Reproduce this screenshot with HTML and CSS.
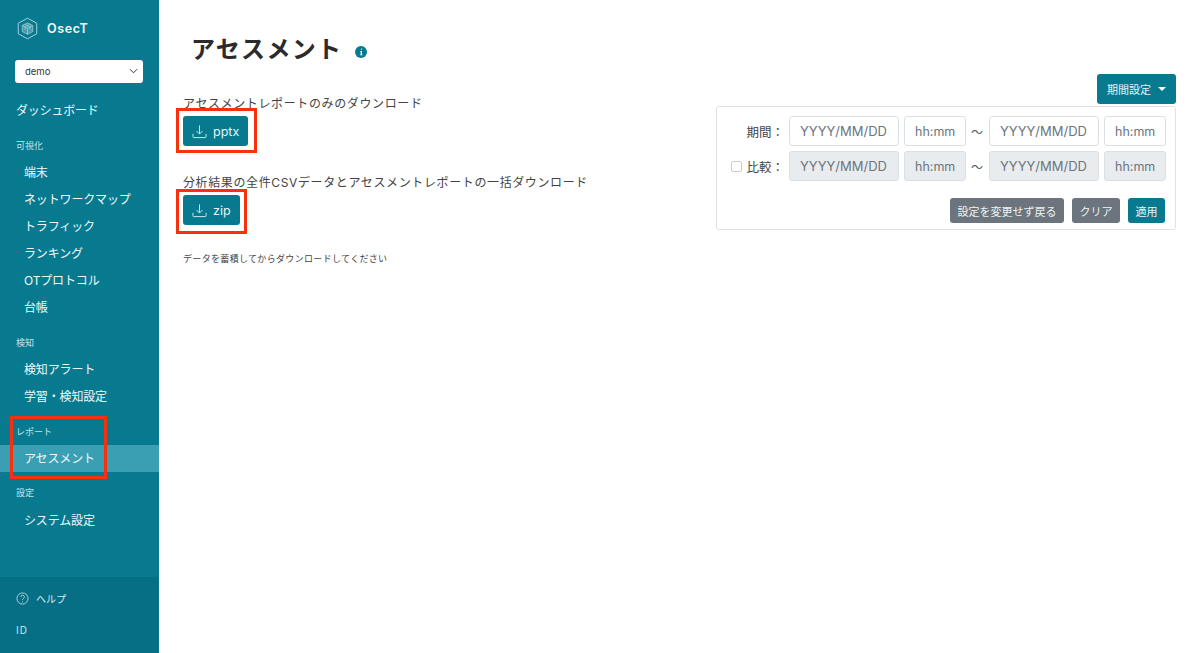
FILE: index.html
```html
<!DOCTYPE html>
<html lang="ja">
<head>
<meta charset="utf-8">
<title>アセスメント</title>
<link rel="stylesheet" href="styles.css">
</head>
<body>
<div class="app">
  <aside class="sidebar">
    <div class="side-top">
      <div class="brand">
        <svg class="logo" viewBox="0 0 24 26" width="21" height="23" fill="none" stroke="#a9d3dc">
          <path d="M12 1.200 22.600 7v12L12 24.800 1.400 19V7Z" stroke-width="1.100"/>
          <path d="M12 6.500 18 9.500v7l-6 3.200-6-3.200v-7Z" fill="#8fc6d0" fill-opacity=".45" stroke-width=".8"/>
          <path d="M6 9.500l6 3.200 6-3.200M12 12.700v7" stroke-width=".8"/>
          <path d="M9 8l6 3.200v3.600M15 8l-6 3.200v3.600" stroke-width=".6"/>
        </svg>
        <span class="brand-name">OsecT</span>
      </div>
      <div class="select">
        <span>demo</span>
        <svg viewBox="0 0 10 6" width="9" height="6" fill="none" stroke="#333" stroke-width="1.100"><path d="M1 1l4 4 4-4"/></svg>
      </div>
      <a class="nav-top">ダッシュボード</a>
      <div class="nav-label first">可視化</div>
      <a class="nav-item">端末</a>
      <a class="nav-item">ネットワークマップ</a>
      <a class="nav-item">トラフィック</a>
      <a class="nav-item">ランキング</a>
      <a class="nav-item">OTプロトコル</a>
      <a class="nav-item">台帳</a>
      <div class="nav-label">検知</div>
      <a class="nav-item">検知アラート</a>
      <a class="nav-item">学習・検知設定</a>
      <div class="nav-label">レポート</div>
      <a class="nav-item active">アセスメント</a>
      <div class="nav-label tight">設定</div>
      <a class="nav-item">システム設定</a>
    </div>
    <div class="side-bottom">
      <div class="help">
        <svg viewBox="0 0 14 14" width="13" height="13" fill="none" stroke="#b5d8df" stroke-width="1"><circle cx="7" cy="7" r="6"/><path d="M5.200 5.400a1.900 1.900 0 1 1 2.700 1.700c-.6.3-.9.7-.9 1.300"/><path d="M7 10v.9"/></svg>
        <span>ヘルプ</span>
      </div>
      <div class="id">ID</div>
    </div>
  </aside>
  <main class="main">
    <h1 class="title">アセスメント<svg class="info" viewBox="0 0 12 12" width="12" height="12"><circle cx="6" cy="6" r="6" fill="#087a90"/><path d="M6 2.600h.9v1.100H6zM5.200 5h1.700v3.500h.7v.8H4.900v-.8h.8V5.800h-.5z" fill="#fff"/></svg></h1>
    <div class="columns">
      <section class="downloads">
        <p class="dl-label">アセスメントレポートのみのダウンロード</p>
        <div class="dl-wrap">
          <button class="btn-dl">
            <svg viewBox="0 0 16 16" width="15" height="15" fill="none" stroke="#d5ebef" stroke-width="1"><path d="M8 1.500v9M4.800 7.500 8 10.700l3.200-3.200M1 10.500v3a1 1 0 0 0 1 1h12a1 1 0 0 0 1-1v-3"/></svg>
            <span>pptx</span>
          </button>
          <span class="mark mark-a"></span>
        </div>
        <p class="dl-label second">分析結果の全件CSVデータとアセスメントレポートの一括ダウンロード</p>
        <div class="dl-wrap">
          <button class="btn-dl">
            <svg viewBox="0 0 16 16" width="15" height="15" fill="none" stroke="#d5ebef" stroke-width="1"><path d="M8 1.500v9M4.800 7.500 8 10.700l3.200-3.200M1 10.500v3a1 1 0 0 0 1 1h12a1 1 0 0 0 1-1v-3"/></svg>
            <span>zip</span>
          </button>
          <span class="mark mark-b"></span>
        </div>
        <p class="note">データを蓄積してからダウンロードしてください</p>
      </section>
      <section class="period">
        <button class="btn-period">期間設定<i class="caret"></i></button>
        <div class="card">
          <div class="row">
            <label class="row-label">期間：</label>
            <span class="field date">YYYY/MM/DD</span>
            <span class="field time">hh:mm</span>
            <span class="tilde">〜</span>
            <span class="field date">YYYY/MM/DD</span>
            <span class="field time">hh:mm</span>
          </div>
          <div class="row">
            <label class="row-label"><i class="check"></i>比較：</label>
            <span class="field date off">YYYY/MM/DD</span>
            <span class="field time off">hh:mm</span>
            <span class="tilde">〜</span>
            <span class="field date off">YYYY/MM/DD</span>
            <span class="field time off">hh:mm</span>
          </div>
          <div class="actions">
            <button class="btn gray">設定を変更せず戻る</button>
            <button class="btn gray">クリア</button>
            <button class="btn teal">適用</button>
          </div>
        </div>
      </section>
    </div>
  </main>
</div>
<span class="mark-side"></span>
</body>
</html>
```

FILE: styles.css
```css
* { box-sizing: border-box; }
html, body { margin: 0; height: 100%; }
body {
  font-family: "Inter", "Noto Sans CJK JP", sans-serif;
  color: #333;
  background: #fff;
  overflow: hidden;
  position: relative;
}
.app { display: flex; height: 653px; }

.sidebar {
  width: 159px;
  flex: none;
  background: #087a90;
  color: #fff;
  display: flex;
  flex-direction: column;
  justify-content: space-between;
}
.side-top { padding-top: 16px; }
.brand { display: flex; align-items: center; gap: 9px; padding-left: 17px; height: 24px; }
.brand-name { font-size: 12.500px; font-weight: 600; letter-spacing: .6px; color: #f0f8fa; }
.select {
  margin: 20px 16px 0 15px;
  height: 23px;
  background: #fff;
  border-radius: 3px;
  display: flex;
  align-items: center;
  justify-content: space-between;
  padding: 0 5px 1px 10px;
  font-size: 9.500px;
  color: #333;
}
.nav-top { display: block; margin-top: 19px; padding-left: 16px; font-size: 12px; line-height: 18px; letter-spacing: -.2px; color: #f0f8fa; }
.nav-label { font-size: 9px; line-height: 14px; padding-left: 16px; margin-top: 15px; margin-bottom: 6px; color: #c5e2e7; }
.nav-label.first { margin-top: 19px; margin-bottom: 6px; }
.nav-label.tight { margin-top: 14px; margin-bottom: 7px; }
.nav-item { display: block; height: 27px; line-height: 27px; padding-left: 24px; font-size: 12px; letter-spacing: -.15px; color: #f0f8fa; }
.nav-item.active { background: #3a9fb3; }
.side-bottom { background: #066f85; height: 76px; padding: 14px 0 0 16px; font-size: 10px; color: #d5ebef; }
.help { display: flex; align-items: center; gap: 7px; height: 14px; }
.id { margin-top: 19px; font-size: 10px; font-weight: 500; letter-spacing: 1px; color: #b5d8df; }

.main { flex: 1; padding: 32px 24px 0 24px; min-width: 0; }
.title { margin: 0 0 0 8px; font-size: 24px; line-height: 36px; font-weight: 700; letter-spacing: 1.300px; display: flex; align-items: center; color: #2b2b2b; }
.info { margin-left: 13px; margin-top: 3px; }
.columns { display: flex; justify-content: space-between; margin-top: 6px; }

.dl-label { margin: 0; font-size: 12px; line-height: 18px; letter-spacing: .62px; color: #444; }
.downloads { padding-top: 21px; }
.dl-wrap { position: relative; width: max-content; margin-top: 3px; }
.btn-dl {
  display: flex;
  align-items: center;
  gap: 6px;
  height: 30px;
  padding: 0 9px;
  border: 0;
  border-radius: 3px;
  background: #087a90;
  color: #e6f4f6;
  font: 12.500px "Inter", sans-serif;
}
.mark { position: absolute; border: 3px solid #f5310f; pointer-events: none; }
.mark-a { inset: -8px -9px -7px -7px; }
.mark-b { inset: -6px -7px -9px -7px; }
.dl-label.second { margin-top: 28px; }
.note { margin: 27px 0 0; font-size: 9px; line-height: 14px; letter-spacing: .33px; color: #444; }

.period { width: 460px; display: flex; flex-direction: column; align-items: flex-end; }
.btn-period {
  height: 30px;
  width: 79px;
  border: 0;
  border-radius: 3px;
  background: #087a90;
  color: #e6f4f6;
  font: 11px "Inter", "Noto Sans CJK JP", sans-serif;
  display: flex;
  align-items: center;
  justify-content: center;
  gap: 7px;
}
.caret { border-left: 4px solid transparent; border-right: 4px solid transparent; border-top: 4px solid #fff; }
.card { width: 100%; margin-top: 2px; height: 124px; border: 1px solid #dfe3e6; border-radius: 3px; padding: 9px 9px 0 0; }
.row { display: flex; align-items: center; gap: 5px; height: 30px; margin-bottom: 5px; }
.row-label { width: 67px; display: flex; align-items: center; justify-content: flex-end; font-size: 12.500px; color: #444; }
.check { width: 11px; height: 11px; border: 1px solid #ccc; border-radius: 2px; margin-right: 4px; }
.field {
  height: 30px;
  border: 1px solid #dbe0e4;
  border-radius: 3px;
  font-size: 13px;
  color: #6c757d;
  display: flex;
  align-items: center;
  padding-left: 10px;
}
.field.date { width: 110px; }
.field.time { width: 62px; font-size: 12.500px; }
.field.off { background: #e9ecef; }
.tilde { width: 12px; text-align: center; font-size: 12px; color: #555; margin-right: 1px; }
.actions { display: flex; justify-content: flex-end; gap: 8px; margin-top: 17px; padding-right: 1px; }
.btn { height: 25px; border: 0; border-radius: 3px; color: #eef3f4; font: 11px "Inter", "Noto Sans CJK JP", sans-serif; padding: 0 7.500px; }
.btn.gray { background: #6c757d; }
.btn.teal { background: #087a90; }

.mark-side { position: absolute; left: 10px; top: 416px; width: 97px; height: 63px; border: 3px solid #f5310f; }
```
